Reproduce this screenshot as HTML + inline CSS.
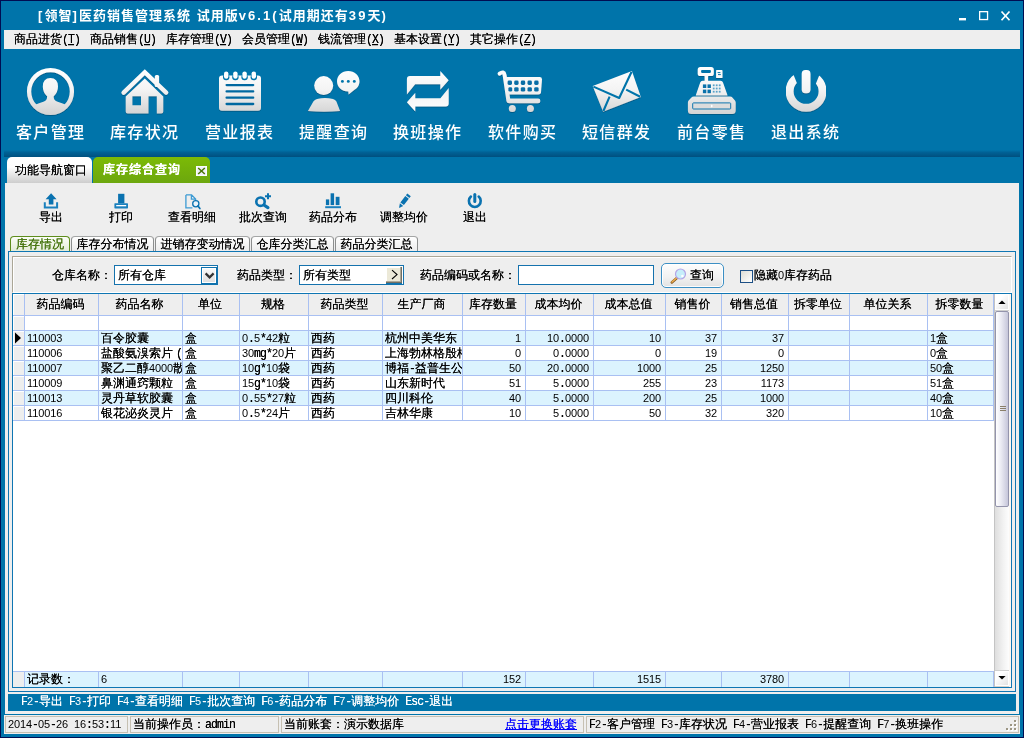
<!DOCTYPE html>
<html lang="zh-CN"><head><meta charset="utf-8"><title>[领智]医药销售管理系统</title>
<style>
*{box-sizing:border-box;margin:0;padding:0}
html,body{width:1024px;height:738px;overflow:hidden}
body{position:relative;background:#0074aa;font:12px/12px "Liberation Sans","WenQuanYi Zen Hei",sans-serif;color:#000;text-shadow:0 0 0 currentColor}
i{font-style:normal;font-family:"Liberation Mono",monospace;font-size:11.5px;letter-spacing:-.9px;display:inline-block;white-space:pre;transform:scaleY(1.13);transform-origin:0 78%}
b{font-weight:normal;font-family:"Liberation Sans",sans-serif;font-size:11px;letter-spacing:-.12px;text-shadow:none}
.abs,.abs>*{position:absolute}
div,span,svg{position:absolute}
.win{left:0;top:0;width:1024px;height:738px;transform:translateZ(0)}
.frame{left:0;top:0;width:1024px;height:738px;border:1px solid #000d52;z-index:50;pointer-events:none}
.title{left:38px;top:9px;height:14px;font:bold 13px/14px "Liberation Sans","Noto Sans CJK SC",sans-serif;color:#fff;white-space:pre;letter-spacing:1px;text-shadow:none}
.title em{font-style:normal;letter-spacing:2.1px}
.menubar{left:4px;top:30px;width:1016px;height:19px;background:#eee;border:1px solid #eee}
.menubar span{top:1px;height:14px;line-height:14px;white-space:pre}
.menubar u{text-decoration:underline}

.big{top:124px;width:94px;height:18px;text-align:center;color:#fff;font:500 16px/18px "Liberation Sans","Noto Sans CJK SC",sans-serif;white-space:nowrap;letter-spacing:1.3px;padding-left:1.3px;text-shadow:none}
.strip{left:4px;top:150px;width:1016px;height:7px;background:linear-gradient(#0074aa 0%,#006195 35%,#00507f 100%)}
.tab1{left:7px;top:157px;width:85px;height:26px;border-radius:5px 5px 0 0;background:linear-gradient(#fff 0%,#fdfdfd 40%,#cdcdcd 100%)}
.tab1 span{left:8px;top:7px;white-space:nowrap}
.tab2{left:93px;top:157px;width:117px;height:26px;border-radius:5px 5px 0 0;background:linear-gradient(#7cba06,#6ca70e)}
.tab2 span{left:10px;top:7px;color:#fff;font:bold 12px/12px "Liberation Sans","Noto Sans CJK SC",sans-serif;letter-spacing:1px;white-space:nowrap}
.tab2 .cb{left:103px;top:9px;width:11px;height:10px;background:#f1f1f8;border:1px solid #fbfbff}
.content{left:5px;top:183px;width:1014px;height:531px;background:#eee}
.tb{top:211px;width:72px;height:13px;line-height:13px;text-align:center;white-space:nowrap}
.st{top:236px;height:15px;border:1px solid #8c8e8e;border-top-color:#a4a6a6;border-bottom:none;border-radius:4px 4px 0 0;background:linear-gradient(#fff,#ececec);line-height:13px;text-align:center;white-space:nowrap;padding-top:1px}
.st.on{border-color:#5e8d1c;color:#44730c;background:linear-gradient(#fbfdf7,#e4ecd8)}
.tabpanel{left:8px;top:251px;width:1008px;height:441px;border:1px solid #0f76b3;background:#eee}
.edge{background:#eee}
.group{left:12px;top:256px;width:1000px;height:37px;background:#eee;border:1px solid #aaa697;border-right-color:#fff;border-bottom-color:#fff;box-shadow:inset 1px 1px 0 #fff}
.lbl{top:269px;height:13px;line-height:13px;white-space:nowrap}
.inp{top:265px;height:20px;background:#fff;border:1px solid #1572ad;box-shadow:inset 0 0 0 1px #fff}
.inp span{left:3px;top:3px;white-space:nowrap;line-height:13px}
.hint{left:8px;top:694px;width:1008px;height:17px;background:#0074aa;color:#fff}
.hint span{left:13px;top:1px;white-space:pre;line-height:13px}
.status{left:4px;top:715px;width:1016px;height:19px;background:#eee;border:1px solid #eee}
.sp{top:0;height:17px;border:1px solid #c6c0b2;line-height:13px;white-space:pre}
.sp span{top:1px;left:2px}

</style></head>
<body>
<div class="win">
<div class="frame"></div>
<div class="title"><em>[</em>领智<em>]</em>医药销售管理系统<em> </em>试用版<em>v6.1(</em>试用期还有<em>39</em>天<em>)</em></div>
<svg style="left:950px;top:6px" width="70" height="20" viewBox="950 6 70 20"><rect x="959" y="18" width="7" height="2.4" fill="#fff"/><rect x="979.65" y="11.65" width="7.9" height="7.9" fill="none" stroke="#fff" stroke-width="1.3"/><path d="M1001.5 11.5L1009.5 20.3M1009.5 11.5L1001.5 20.3" stroke="#fff" stroke-width="1.7" fill="none"/></svg>
<div class="menubar">
<span style="left:9px">商品进货<i>(<u>T</u>)</i></span>
<span style="left:85px">商品销售<i>(<u>U</u>)</i></span>
<span style="left:161px">库存管理<i>(<u>V</u>)</i></span>
<span style="left:237px">会员管理<i>(<u>W</u>)</i></span>
<span style="left:313px">钱流管理<i>(<u>X</u>)</i></span>
<span style="left:389px">基本设置<i>(<u>Y</u>)</i></span>
<span style="left:465px">其它操作<i>(<u>Z</u>)</i></span>
</div>
<div class="big" style="left:3px">客户管理</div>
<div class="big" style="left:97px">库存状况</div>
<div class="big" style="left:192px">营业报表</div>
<div class="big" style="left:286px">提醒查询</div>
<div class="big" style="left:380px">换班操作</div>
<div class="big" style="left:475px">软件购买</div>
<div class="big" style="left:569px">短信群发</div>
<div class="big" style="left:664px">前台零售</div>
<div class="big" style="left:758px">退出系统</div>
<div class="strip"></div>
<svg style="left:0;top:60px" width="1024" height="62" viewBox="0 60 1024 62">
<defs>
<linearGradient id="g" gradientUnits="userSpaceOnUse" x1="0" y1="68" x2="0" y2="115"><stop offset="0" stop-color="#fff"/><stop offset=".45" stop-color="#f4f4f4"/><stop offset="1" stop-color="#d2d2d2"/></linearGradient>
<mask id="pm" maskUnits="userSpaceOnUse" x="780" y="60" width="60" height="60"><rect x="780" y="60" width="60" height="60" fill="#fff"/><path d="M787.5 60H825.5L812.8 91.3H800.2Z" fill="#000"/></mask>
<clipPath id="c1"><circle cx="50.5" cy="91.5" r="20.2"/></clipPath>
<filter id="sh" x="-10%" y="-10%" width="120%" height="130%"><feDropShadow dx="0" dy="1" stdDeviation=".7" flood-color="#003a5c" flood-opacity=".45"/></filter>
</defs>
<g fill="url(#g)" filter="url(#sh)">
<!-- customer -->
<circle cx="50.5" cy="91.5" r="21.4" fill="none" stroke="url(#g)" stroke-width="4.3"/>
<g clip-path="url(#c1)"><path d="M30 116V107.5Q33 105 44 101.6Q47 100.4 47.2 96.5Q42.8 92.5 42.8 86.5Q42.8 77.9 50.4 77.9Q58 77.9 58 86.5Q58 92.5 53.6 96.5Q53.8 100.4 57 101.6Q68 105 71 107.5V116Z"/></g>
<!-- house -->
<rect x="154.8" y="75" width="4.3" height="12" rx="1.5"/>
<path d="M123.6 92.6L144.8 72.2L166.2 92.6" fill="none" stroke="url(#g)" stroke-width="4.4" stroke-linecap="round" stroke-linejoin="miter"/>
<path fill-rule="evenodd" d="M144.8 78.6L163.3 96.4V111.6Q163.3 113.6 161.3 113.6H127.7Q125.7 113.6 125.7 111.6V96.4ZM132.4 96.3V105.2H141V96.3ZM148.5 96.3V113.6H156.8V96.3Z"/>
<!-- notepad -->
<rect x="219" y="75.5" width="42" height="35.2" rx="3"/>
</g>
<g fill="#0074aa"><rect x="223" y="74" width="6.4" height="6.2" rx="3"/><rect x="232.2" y="74" width="6.4" height="6.2" rx="3"/><rect x="241.4" y="74" width="6.4" height="6.2" rx="3"/><rect x="250.6" y="74" width="6.4" height="6.2" rx="3"/></g>
<g fill="#fff"><rect x="224" y="71.4" width="4.4" height="7.4" rx="2.2"/><rect x="233.2" y="71.4" width="4.4" height="7.4" rx="2.2"/><rect x="242.4" y="71.4" width="4.4" height="7.4" rx="2.2"/><rect x="251.6" y="71.4" width="4.4" height="7.4" rx="2.2"/></g>
<path d="M226.6 85.1H253.2M226.6 91.4H253.2M226.6 97.7H253.2M226.6 104H253.2" stroke="#0068a0" stroke-width="2.3" stroke-linecap="round"/>
<g fill="url(#g)" filter="url(#sh)">
<!-- remind -->
<circle cx="323.7" cy="85.6" r="9.5"/>
<path d="M307.9 111L313.4 101.4Q314.5 99.5 317 98.9Q325 97.1 333 98.9Q335.4 99.5 336.4 101.4L340.1 111Q324 112.6 307.9 111Z"/>
<path d="M348.2 71C354.6 71 359.5 75.4 359.5 81.3C359.5 85.3 357.2 88.6 353.6 90.4L348.6 94.4L348.3 91.6C341.6 91.6 337 87 337 81.3C337 75.4 341.8 71 348.2 71Z"/>
</g>
<g fill="#0074aa"><circle cx="342.4" cy="81.4" r="1.45"/><circle cx="348.3" cy="81.4" r="1.45"/><circle cx="354.3" cy="81.4" r="1.45"/></g>
<g fill="url(#g)" filter="url(#sh)">
<!-- swap -->
<path id="sw" d="M440.3 76.1V70.9L448.7 80.2L440.3 89.7V84.2H415.2L406.9 94.6V79.1Q406.9 76.1 409.9 76.1Z"/>
<use href="#sw" transform="rotate(180 427.8 91.25)"/>
<!-- cart -->
<path d="M499.6 73.6Q503.8 70.6 504.6 75L508.4 100.6" fill="none" stroke="url(#g)" stroke-width="4" stroke-linecap="round"/>
<path d="M506.2 77H539.6Q542 77 542 79.4L541 92.2Q540.8 94.5 538.4 94.5H508.4Z"/>
<rect x="506.8" y="98.6" width="33.6" height="4.6" rx="2.3"/>
<circle cx="512.3" cy="108.4" r="3.5"/><circle cx="530.4" cy="108.4" r="3.5"/>
</g>
<g fill="#0a6ea6"><rect x="507.6" y="80.5" width="4.4" height="4.4" rx="1.4"/><rect x="514.2" y="80.5" width="4.4" height="4.4" rx="1.4"/><rect x="520.8" y="80.5" width="4.4" height="4.4" rx="1.4"/><rect x="527.5" y="80.5" width="4.4" height="4.4" rx="1.4"/><rect x="534.2" y="80.5" width="4.4" height="4.4" rx="1.4"/><rect x="508.4" y="87.2" width="3.8" height="4.4" rx="1.4"/><rect x="514.2" y="87.2" width="4.4" height="4.4" rx="1.4"/><rect x="520.8" y="87.2" width="4.4" height="4.4" rx="1.4"/><rect x="527.5" y="87.2" width="4.4" height="4.4" rx="1.4"/><rect x="534.2" y="87.2" width="4.4" height="4.4" rx="1.4"/></g>
<g fill="url(#g)" filter="url(#sh)">
<!-- envelope -->
<path d="M592.7 85.9L631.9 70.9L640.9 96.9L603.1 111.8Z"/>
</g>
<path d="M593.4 86.6L619.2 98L631.6 71.8M603.4 111L609.6 96.6M640.2 96.8L626.2 89.6" fill="none" stroke="#0074aa" stroke-width="2.1" stroke-linejoin="round"/>
<g fill="url(#g)" filter="url(#sh)">
<!-- register -->
<rect x="697.7" y="67.1" width="16.1" height="9" rx="2.6"/>
<rect x="704.6" y="75.5" width="3.5" height="6"/>
<rect x="716.1" y="70.1" width="6.4" height="7.9" rx=".6"/>
<path d="M702.6 80.7H720.5Q722.5 80.7 723 82.4L727.6 95.4H695.7L700.2 82.4Q700.8 80.7 702.6 80.7Z"/>
<path d="M694 96.6H730Q731.6 96.6 732.6 97.8L735 100.6Q735.7 101.4 735.7 102.6V110.6Q735.7 114.1 732.2 114.1H691.4Q687.9 114.1 687.9 110.6V102.6Q687.9 101.4 688.6 100.6L691.2 97.8Q692.2 96.6 694 96.6Z"/>
</g>
<rect x="701.1" y="70.1" width="9.8" height="2.8" rx=".8" fill="#0074aa"/>
<path d="M717.6 72.6H720.4M718 74.6H720.8" stroke="#0074aa" stroke-width="1"/>
<g fill="#0a72ab"><rect x="702.9" y="84.4" width="3.4" height="3.6"/><rect x="707.5" y="84.4" width="3.4" height="3.6"/><rect x="702.9" y="89.6" width="3.4" height="3.6"/><rect x="707.5" y="89.6" width="3.4" height="3.6"/></g>
<g fill="#5aa2c8"><rect x="712.8" y="84.4" width="1.8" height="1.8"/><rect x="715.8" y="84.4" width="1.8" height="1.8"/><rect x="718.8" y="84.4" width="1.8" height="1.8"/><rect x="712.8" y="87.6" width="1.8" height="1.8"/><rect x="715.8" y="87.6" width="1.8" height="1.8"/><rect x="718.8" y="87.6" width="1.8" height="1.8"/><rect x="712.8" y="90.8" width="1.8" height="1.8"/><rect x="715.8" y="90.8" width="1.8" height="1.8"/><rect x="718.8" y="90.8" width="1.8" height="1.8"/></g>
<rect x="692.7" y="102.9" width="38" height="6.1" rx=".8" fill="#dcdcdc" stroke="#0f76ae" stroke-width="1"/>
<path d="M711 104.4L713.2 106L711 107.6Z" fill="#fff"/>
<g fill="url(#g)" filter="url(#sh)">
<!-- power -->
<circle cx="806.1" cy="91.3" r="16.5" fill="none" stroke="url(#g)" stroke-width="8" mask="url(#pm)"/>
<rect x="801.7" y="70.1" width="8.8" height="23.1" rx="3.6"/>
</g>
</svg>
<div class="tab1"><span>功能导航窗口</span></div>
<div class="tab2"><span>库存综合查询</span><span class="cb"></span><svg style="left:103px;top:9px" width="11" height="10" viewBox="0 0 11 10"><path d="M2.2 2L8.8 8M8.8 2L2.2 8" stroke="#4a7606" stroke-width="1.5"/></svg></div>
<div class="content"></div>
<div class="tb" style="left:15px">导出</div>
<div class="tb" style="left:85px">打印</div>
<div class="tb" style="left:156px">查看明细</div>
<div class="tb" style="left:227px">批次查询</div>
<div class="tb" style="left:297px">药品分布</div>
<div class="tb" style="left:368px">调整均价</div>
<div class="tb" style="left:439px">退出</div>
<div class="st on" style="left:10px;width:60px">库存情况</div>
<div class="st" style="left:71px;width:83px">库存分布情况</div>
<div class="st" style="left:155px;width:95px">进销存变动情况</div>
<div class="st" style="left:251px;width:83px">仓库分类汇总</div>
<div class="st" style="left:335px;width:83px">药品分类汇总</div>
<div class="edge" style="left:5px;top:251px;width:3px;height:443px"></div><div class="edge" style="left:1016px;top:251px;width:3px;height:443px"></div><div class="edge" style="left:5px;top:691px;width:1014px;height:3px"></div>
<div class="tabpanel"></div>
<svg style="left:30px;top:190px" width="470" height="22" viewBox="30 190 470 22">
<g fill="#0a72b0">
<path d="M51.1 193.2L56.6 199.2H53.4V204.6H48.8V199.2H45.6Z"/>
<path d="M44.8 202.3V207.5H57.1V202.3" fill="none" stroke="#1a80bd" stroke-width="2"/>
<rect x="118.1" y="193.8" width="6.3" height="9.6"/>
<rect x="114.4" y="203.2" width="13.6" height="5.2" rx=".6" fill="#1a80bd"/>
<rect x="116.2" y="205" width="10" height="1.3" fill="#fff"/>
</g>
<path d="M185.9 194.9H191.6L195.6 199V200.4M191.4 195V199.2H195.4M185.9 194.9V207.9H192.4" fill="none" stroke="#3d9bd4" stroke-width="1.3"/>
<circle cx="195.8" cy="203.7" r="3.1" fill="#eaf4fb" stroke="#0a72b0" stroke-width="1.3"/>
<path d="M198 206L199.9 208.6" stroke="#0a72b0" stroke-width="1.7" stroke-linecap="round"/>
<circle cx="260.5" cy="201.7" r="4.2" fill="none" stroke="#0a72b0" stroke-width="2.6"/>
<path d="M263.9 205L267.9 207.6" stroke="#0a72b0" stroke-width="3.2" stroke-linecap="round"/>
<path d="M265 196.3H271M268 193.3V199.3" stroke="#0a72b0" stroke-width="2"/>
<g fill="#0a72b0">
<rect x="325.9" y="199.4" width="3.3" height="5.7"/><rect x="330.6" y="193.3" width="3.5" height="11.8"/><rect x="335.7" y="196.8" width="3.8" height="8.3"/>
<rect x="325.2" y="206.2" width="15.8" height="2" fill="#1a80bd"/>
<path d="M399 207.9L403.2 205.9L399.9 203.2ZM403.9 205.1L400.4 202.4L405.3 196.1L408.8 198.8ZM409.4 198L405.9 195.3L407.3 193.5L410.8 196.2Z"/>
</g>
<path d="M470.9 196.6A5.9 5.9 0 1 0 478.7 196.6" fill="none" stroke="#0a72b0" stroke-width="2.6" stroke-linecap="round"/>
<path d="M474.8 194.4V201.4" stroke="#0a72b0" stroke-width="3" stroke-linecap="round"/>
</svg>
<div class="group"></div>
<span class="lbl" style="left:52px">仓库名称：</span>
<div class="inp" style="left:114px;width:104px"><span>所有仓库</span></div>
<span class="lbl" style="left:237px">药品类型：</span>
<div class="inp" style="left:299px;width:105px"><span>所有类型</span></div>
<span class="lbl" style="left:420px">药品编码或名称：</span>
<div class="inp" style="left:518px;width:136px"></div>
<span class="lbl" style="left:754px">隐藏<b>0</b>库存药品</span>
<div style="left:201px;top:267px;width:16px;height:17px;border:1px solid #0f72ad;background:linear-gradient(#fafafa,#dedede);box-shadow:inset 0 0 0 1px #fff"></div>
<div style="left:201px;top:283px;width:16px;height:2px;background:#0f72ad"></div>
<svg style="left:203px;top:271px" width="13" height="10" viewBox="203 271 13 10"><path d="M205.6 273.4L209.6 277.4L213.6 273.4" fill="none" stroke="#333" stroke-width="2.2"/></svg>
<div style="left:386px;top:267px;width:16px;height:16px;background:#ece9d8;border-right:1px solid #716f64;border-bottom:1px solid #716f64;box-shadow:inset -1px -1px 0 #aca899,inset 1px 1px 0 #fff"></div>
<div style="left:386px;top:283px;width:16px;height:2px;background:#0f72ad"></div>
<svg style="left:388px;top:268px" width="13" height="14" viewBox="388 268 13 14"><path d="M392 270.2L397 274.6L392 279" fill="none" stroke="#000" stroke-width="1.1"/></svg>
<div style="left:661px;top:263px;width:63px;height:25px;border:1px solid #3c8fc4;border-radius:5px;background:linear-gradient(#fdfdfd,#f2f2f2 55%,#e2e2e2);box-shadow:inset 0 0 0 1px rgba(255,255,255,.9)"></div>
<svg style="left:668px;top:266px" width="22" height="20" viewBox="668 266 22 20"><path d="M676.6 278.2L671.8 282.4" stroke="#8a5a20" stroke-width="2.6" stroke-linecap="round"/><path d="M676.6 278L672 282" stroke="#f0b050" stroke-width="1.4" stroke-linecap="round"/><circle cx="680.5" cy="274" r="5" fill="#c6eefa" stroke="#b4a6e6" stroke-width="1.2"/><circle cx="682.4" cy="276" r="1.3" fill="#fff"/></svg>
<span class="lbl" style="left:690px">查询</span>
<div style="left:740px;top:270px;width:13px;height:13px;border:1px solid #1c4f85;background:linear-gradient(135deg,#dcdcd4,#fff)"></div>
<div class="hint"><span><i>F</i><b>2</b><i>-</i>导出<i> F</i><b>3</b><i>-</i>打印<i> F</i><b>4</b><i>-</i>查看明细<i> F</i><b>5</b><i>-</i>批次查询<i> F</i><b>6</b><i>-</i>药品分布<i> F</i><b>7</b><i>-</i>调整均价<i> Esc-</i>退出</span></div>
<div class="status">
<div class="sp" style="left:0;width:123px"><span><b>2014</b><i>-</i><b>05</b><i>-</i><b>26</b><i> </i><b>16</b><i>:</i><b>53</b><i>:</i><b>11</b></span></div>
<div class="sp" style="left:125px;width:149px"><span>当前操作员：<i>admin</i></span></div>
<div class="sp" style="left:276px;width:303px"><span>当前账套：演示数据库</span><span style="left:223px;color:#00f;text-decoration:underline">点击更换账套</span></div>
<div class="sp" style="left:581px;width:433px"><span><i>F</i><b>2</b><i>-</i>客户管理<i> F</i><b>3</b><i>-</i>库存状况<i> F</i><b>4</b><i>-</i>营业报表<i> F</i><b>6</b><i>-</i>提醒查询<i> F</i><b>7</b><i>-</i>换班操作</span></div>
<svg style="left:1000px;top:3px" width="13" height="13" viewBox="0 0 13 13"><g fill="#fff"><rect x="10" y="2" width="2" height="2"/><rect x="6" y="6" width="2" height="2"/><rect x="10" y="6" width="2" height="2"/><rect x="2" y="10" width="2" height="2"/><rect x="6" y="10" width="2" height="2"/><rect x="10" y="10" width="2" height="2"/></g><g fill="#9c9684"><rect x="9" y="1" width="2" height="2"/><rect x="5" y="5" width="2" height="2"/><rect x="9" y="5" width="2" height="2"/><rect x="1" y="9" width="2" height="2"/><rect x="5" y="9" width="2" height="2"/><rect x="9" y="9" width="2" height="2"/></g></svg>
</div>
<div style="left:12px;top:293px;width:1000px;height:395px;border:1px solid #0f76b3;background:#fff"></div>
<div style="left:13px;top:294px;width:981px;height:21px;background:#eee"></div>
<div style="left:13px;top:294px;width:11px;height:127px;background:#eee"></div>
<div style="left:13px;top:294px;width:1px;height:127px;background:#fff"></div>
<div style="left:13px;top:672px;width:1px;height:15px;background:#fff"></div>
<div style="left:13px;top:294px;width:11px;height:1px;background:#fff"></div>
<div style="left:13px;top:316px;width:11px;height:1px;background:#fff"></div>
<div style="left:13px;top:331px;width:11px;height:1px;background:#fff"></div>
<div style="left:13px;top:346px;width:11px;height:1px;background:#fff"></div>
<div style="left:13px;top:361px;width:11px;height:1px;background:#fff"></div>
<div style="left:13px;top:376px;width:11px;height:1px;background:#fff"></div>
<div style="left:13px;top:391px;width:11px;height:1px;background:#fff"></div>
<div style="left:13px;top:406px;width:11px;height:1px;background:#fff"></div>
<div style="left:13px;top:672px;width:11px;height:1px;background:#fff"></div>
<div style="left:25px;top:331px;width:969px;height:14px;background:#dbf3fe"></div>
<div style="left:25px;top:361px;width:969px;height:14px;background:#dbf3fe"></div>
<div style="left:25px;top:391px;width:969px;height:14px;background:#dbf3fe"></div>
<div style="left:25px;top:672px;width:969px;height:15px;background:#dbf3fe"></div>
<div style="left:13px;top:672px;width:11px;height:15px;background:#eee"></div>
<div style="left:13px;top:315px;width:981px;height:1px;background:#a9c0f2"></div>
<div style="left:13px;top:330px;width:981px;height:1px;background:#a9c0f2"></div>
<div style="left:13px;top:345px;width:981px;height:1px;background:#a9c0f2"></div>
<div style="left:13px;top:360px;width:981px;height:1px;background:#a9c0f2"></div>
<div style="left:13px;top:375px;width:981px;height:1px;background:#a9c0f2"></div>
<div style="left:13px;top:390px;width:981px;height:1px;background:#a9c0f2"></div>
<div style="left:13px;top:405px;width:981px;height:1px;background:#a9c0f2"></div>
<div style="left:13px;top:420px;width:981px;height:1px;background:#a9c0f2"></div>
<div style="left:13px;top:671px;width:981px;height:1px;background:#a9c0f2"></div>
<div style="left:24px;top:294px;width:1px;height:127px;background:#a9c0f2"></div>
<div style="left:24px;top:671px;width:1px;height:16px;background:#a9c0f2"></div>
<div style="left:98px;top:294px;width:1px;height:127px;background:#a9c0f2"></div>
<div style="left:98px;top:671px;width:1px;height:16px;background:#a9c0f2"></div>
<div style="left:182px;top:294px;width:1px;height:127px;background:#a9c0f2"></div>
<div style="left:182px;top:671px;width:1px;height:16px;background:#a9c0f2"></div>
<div style="left:239px;top:294px;width:1px;height:127px;background:#a9c0f2"></div>
<div style="left:239px;top:671px;width:1px;height:16px;background:#a9c0f2"></div>
<div style="left:308px;top:294px;width:1px;height:127px;background:#a9c0f2"></div>
<div style="left:308px;top:671px;width:1px;height:16px;background:#a9c0f2"></div>
<div style="left:382px;top:294px;width:1px;height:127px;background:#a9c0f2"></div>
<div style="left:382px;top:671px;width:1px;height:16px;background:#a9c0f2"></div>
<div style="left:462px;top:294px;width:1px;height:127px;background:#a9c0f2"></div>
<div style="left:462px;top:671px;width:1px;height:16px;background:#a9c0f2"></div>
<div style="left:525px;top:294px;width:1px;height:127px;background:#a9c0f2"></div>
<div style="left:525px;top:671px;width:1px;height:16px;background:#a9c0f2"></div>
<div style="left:593px;top:294px;width:1px;height:127px;background:#a9c0f2"></div>
<div style="left:593px;top:671px;width:1px;height:16px;background:#a9c0f2"></div>
<div style="left:665px;top:294px;width:1px;height:127px;background:#a9c0f2"></div>
<div style="left:665px;top:671px;width:1px;height:16px;background:#a9c0f2"></div>
<div style="left:721px;top:294px;width:1px;height:127px;background:#a9c0f2"></div>
<div style="left:721px;top:671px;width:1px;height:16px;background:#a9c0f2"></div>
<div style="left:788px;top:294px;width:1px;height:127px;background:#a9c0f2"></div>
<div style="left:788px;top:671px;width:1px;height:16px;background:#a9c0f2"></div>
<div style="left:849px;top:294px;width:1px;height:127px;background:#a9c0f2"></div>
<div style="left:849px;top:671px;width:1px;height:16px;background:#a9c0f2"></div>
<div style="left:927px;top:294px;width:1px;height:127px;background:#a9c0f2"></div>
<div style="left:927px;top:671px;width:1px;height:16px;background:#a9c0f2"></div>
<div style="left:993px;top:294px;width:1px;height:127px;background:#a9c0f2"></div>
<div style="left:993px;top:671px;width:1px;height:16px;background:#a9c0f2"></div>
<span style="left:24px;top:298px;width:73px;text-align:center;line-height:13px;white-space:nowrap">药品编码</span>
<span style="left:98px;top:298px;width:83px;text-align:center;line-height:13px;white-space:nowrap">药品名称</span>
<span style="left:182px;top:298px;width:56px;text-align:center;line-height:13px;white-space:nowrap">单位</span>
<span style="left:239px;top:298px;width:68px;text-align:center;line-height:13px;white-space:nowrap">规格</span>
<span style="left:308px;top:298px;width:73px;text-align:center;line-height:13px;white-space:nowrap">药品类型</span>
<span style="left:382px;top:298px;width:79px;text-align:center;line-height:13px;white-space:nowrap">生产厂商</span>
<span style="left:462px;top:298px;width:62px;text-align:center;line-height:13px;white-space:nowrap">库存数量</span>
<span style="left:525px;top:298px;width:67px;text-align:center;line-height:13px;white-space:nowrap">成本均价</span>
<span style="left:593px;top:298px;width:71px;text-align:center;line-height:13px;white-space:nowrap">成本总值</span>
<span style="left:665px;top:298px;width:55px;text-align:center;line-height:13px;white-space:nowrap">销售价</span>
<span style="left:721px;top:298px;width:66px;text-align:center;line-height:13px;white-space:nowrap">销售总值</span>
<span style="left:788px;top:298px;width:60px;text-align:center;line-height:13px;white-space:nowrap">拆零单位</span>
<span style="left:849px;top:298px;width:77px;text-align:center;line-height:13px;white-space:nowrap">单位关系</span>
<span style="left:927px;top:298px;width:65px;text-align:center;line-height:13px;white-space:nowrap">拆零数量</span>
<span style="left:25px;top:332px;width:73px;padding-left:2px;line-height:13px;height:14px;overflow:hidden;white-space:nowrap"><b>110003</b></span>
<span style="left:99px;top:332px;width:83px;padding-left:2px;line-height:13px;height:14px;overflow:hidden;white-space:nowrap">百令胶囊</span>
<span style="left:183px;top:332px;width:56px;padding-left:2px;line-height:13px;height:14px;overflow:hidden;white-space:nowrap">盒</span>
<span style="left:240px;top:332px;width:68px;padding-left:2px;line-height:13px;height:14px;overflow:hidden;white-space:nowrap"><b>0</b><i>.</i><b>5</b><i>*</i><b>42</b>粒</span>
<span style="left:309px;top:332px;width:73px;padding-left:2px;line-height:13px;height:14px;overflow:hidden;white-space:nowrap">西药</span>
<span style="left:383px;top:332px;width:79px;padding-left:2px;line-height:13px;height:14px;overflow:hidden;white-space:nowrap">杭州中美华东</span>
<span style="left:463px;top:332px;width:62px;text-align:right;padding-right:4px;line-height:13px;height:14px;overflow:hidden;white-space:nowrap"><b>1</b></span>
<span style="left:526px;top:332px;width:67px;text-align:right;padding-right:4px;line-height:13px;height:14px;overflow:hidden;white-space:nowrap"><b>10</b><i>.</i><b>0000</b></span>
<span style="left:594px;top:332px;width:71px;text-align:right;padding-right:4px;line-height:13px;height:14px;overflow:hidden;white-space:nowrap"><b>10</b></span>
<span style="left:666px;top:332px;width:55px;text-align:right;padding-right:4px;line-height:13px;height:14px;overflow:hidden;white-space:nowrap"><b>37</b></span>
<span style="left:722px;top:332px;width:66px;text-align:right;padding-right:4px;line-height:13px;height:14px;overflow:hidden;white-space:nowrap"><b>37</b></span>
<span style="left:928px;top:332px;width:65px;padding-left:2px;line-height:13px;height:14px;overflow:hidden;white-space:nowrap"><b>1</b>盒</span>
<span style="left:25px;top:347px;width:73px;padding-left:2px;line-height:13px;height:14px;overflow:hidden;white-space:nowrap"><b>110006</b></span>
<span style="left:99px;top:347px;width:83px;padding-left:2px;line-height:13px;height:14px;overflow:hidden;white-space:nowrap">盐酸氨溴索片<i style="margin-left:3px">(</i></span>
<span style="left:183px;top:347px;width:56px;padding-left:2px;line-height:13px;height:14px;overflow:hidden;white-space:nowrap">盒</span>
<span style="left:240px;top:347px;width:68px;padding-left:2px;line-height:13px;height:14px;overflow:hidden;white-space:nowrap"><b>30</b><i>mg*</i><b>20</b>片</span>
<span style="left:309px;top:347px;width:73px;padding-left:2px;line-height:13px;height:14px;overflow:hidden;white-space:nowrap">西药</span>
<span style="left:383px;top:347px;width:79px;padding-left:2px;line-height:13px;height:14px;overflow:hidden;white-space:nowrap">上海勃林格殷格</span>
<span style="left:463px;top:347px;width:62px;text-align:right;padding-right:4px;line-height:13px;height:14px;overflow:hidden;white-space:nowrap"><b>0</b></span>
<span style="left:526px;top:347px;width:67px;text-align:right;padding-right:4px;line-height:13px;height:14px;overflow:hidden;white-space:nowrap"><b>0</b><i>.</i><b>0000</b></span>
<span style="left:594px;top:347px;width:71px;text-align:right;padding-right:4px;line-height:13px;height:14px;overflow:hidden;white-space:nowrap"><b>0</b></span>
<span style="left:666px;top:347px;width:55px;text-align:right;padding-right:4px;line-height:13px;height:14px;overflow:hidden;white-space:nowrap"><b>19</b></span>
<span style="left:722px;top:347px;width:66px;text-align:right;padding-right:4px;line-height:13px;height:14px;overflow:hidden;white-space:nowrap"><b>0</b></span>
<span style="left:928px;top:347px;width:65px;padding-left:2px;line-height:13px;height:14px;overflow:hidden;white-space:nowrap"><b>0</b>盒</span>
<span style="left:25px;top:362px;width:73px;padding-left:2px;line-height:13px;height:14px;overflow:hidden;white-space:nowrap"><b>110007</b></span>
<span style="left:99px;top:362px;width:83px;padding-left:2px;line-height:13px;height:14px;overflow:hidden;white-space:nowrap">聚乙二醇<b>4000</b>散</span>
<span style="left:183px;top:362px;width:56px;padding-left:2px;line-height:13px;height:14px;overflow:hidden;white-space:nowrap">盒</span>
<span style="left:240px;top:362px;width:68px;padding-left:2px;line-height:13px;height:14px;overflow:hidden;white-space:nowrap"><b>10</b><i>g*</i><b>10</b>袋</span>
<span style="left:309px;top:362px;width:73px;padding-left:2px;line-height:13px;height:14px;overflow:hidden;white-space:nowrap">西药</span>
<span style="left:383px;top:362px;width:79px;padding-left:2px;line-height:13px;height:14px;overflow:hidden;white-space:nowrap">博福<i>-</i>益普生公</span>
<span style="left:463px;top:362px;width:62px;text-align:right;padding-right:4px;line-height:13px;height:14px;overflow:hidden;white-space:nowrap"><b>50</b></span>
<span style="left:526px;top:362px;width:67px;text-align:right;padding-right:4px;line-height:13px;height:14px;overflow:hidden;white-space:nowrap"><b>20</b><i>.</i><b>0000</b></span>
<span style="left:594px;top:362px;width:71px;text-align:right;padding-right:4px;line-height:13px;height:14px;overflow:hidden;white-space:nowrap"><b>1000</b></span>
<span style="left:666px;top:362px;width:55px;text-align:right;padding-right:4px;line-height:13px;height:14px;overflow:hidden;white-space:nowrap"><b>25</b></span>
<span style="left:722px;top:362px;width:66px;text-align:right;padding-right:4px;line-height:13px;height:14px;overflow:hidden;white-space:nowrap"><b>1250</b></span>
<span style="left:928px;top:362px;width:65px;padding-left:2px;line-height:13px;height:14px;overflow:hidden;white-space:nowrap"><b>50</b>盒</span>
<span style="left:25px;top:377px;width:73px;padding-left:2px;line-height:13px;height:14px;overflow:hidden;white-space:nowrap"><b>110009</b></span>
<span style="left:99px;top:377px;width:83px;padding-left:2px;line-height:13px;height:14px;overflow:hidden;white-space:nowrap">鼻渊通窍颗粒</span>
<span style="left:183px;top:377px;width:56px;padding-left:2px;line-height:13px;height:14px;overflow:hidden;white-space:nowrap">盒</span>
<span style="left:240px;top:377px;width:68px;padding-left:2px;line-height:13px;height:14px;overflow:hidden;white-space:nowrap"><b>15</b><i>g*</i><b>10</b>袋</span>
<span style="left:309px;top:377px;width:73px;padding-left:2px;line-height:13px;height:14px;overflow:hidden;white-space:nowrap">西药</span>
<span style="left:383px;top:377px;width:79px;padding-left:2px;line-height:13px;height:14px;overflow:hidden;white-space:nowrap">山东新时代</span>
<span style="left:463px;top:377px;width:62px;text-align:right;padding-right:4px;line-height:13px;height:14px;overflow:hidden;white-space:nowrap"><b>51</b></span>
<span style="left:526px;top:377px;width:67px;text-align:right;padding-right:4px;line-height:13px;height:14px;overflow:hidden;white-space:nowrap"><b>5</b><i>.</i><b>0000</b></span>
<span style="left:594px;top:377px;width:71px;text-align:right;padding-right:4px;line-height:13px;height:14px;overflow:hidden;white-space:nowrap"><b>255</b></span>
<span style="left:666px;top:377px;width:55px;text-align:right;padding-right:4px;line-height:13px;height:14px;overflow:hidden;white-space:nowrap"><b>23</b></span>
<span style="left:722px;top:377px;width:66px;text-align:right;padding-right:4px;line-height:13px;height:14px;overflow:hidden;white-space:nowrap"><b>1173</b></span>
<span style="left:928px;top:377px;width:65px;padding-left:2px;line-height:13px;height:14px;overflow:hidden;white-space:nowrap"><b>51</b>盒</span>
<span style="left:25px;top:392px;width:73px;padding-left:2px;line-height:13px;height:14px;overflow:hidden;white-space:nowrap"><b>110013</b></span>
<span style="left:99px;top:392px;width:83px;padding-left:2px;line-height:13px;height:14px;overflow:hidden;white-space:nowrap">灵丹草软胶囊</span>
<span style="left:183px;top:392px;width:56px;padding-left:2px;line-height:13px;height:14px;overflow:hidden;white-space:nowrap">盒</span>
<span style="left:240px;top:392px;width:68px;padding-left:2px;line-height:13px;height:14px;overflow:hidden;white-space:nowrap"><b>0</b><i>.</i><b>55</b><i>*</i><b>27</b>粒</span>
<span style="left:309px;top:392px;width:73px;padding-left:2px;line-height:13px;height:14px;overflow:hidden;white-space:nowrap">西药</span>
<span style="left:383px;top:392px;width:79px;padding-left:2px;line-height:13px;height:14px;overflow:hidden;white-space:nowrap">四川科伦</span>
<span style="left:463px;top:392px;width:62px;text-align:right;padding-right:4px;line-height:13px;height:14px;overflow:hidden;white-space:nowrap"><b>40</b></span>
<span style="left:526px;top:392px;width:67px;text-align:right;padding-right:4px;line-height:13px;height:14px;overflow:hidden;white-space:nowrap"><b>5</b><i>.</i><b>0000</b></span>
<span style="left:594px;top:392px;width:71px;text-align:right;padding-right:4px;line-height:13px;height:14px;overflow:hidden;white-space:nowrap"><b>200</b></span>
<span style="left:666px;top:392px;width:55px;text-align:right;padding-right:4px;line-height:13px;height:14px;overflow:hidden;white-space:nowrap"><b>25</b></span>
<span style="left:722px;top:392px;width:66px;text-align:right;padding-right:4px;line-height:13px;height:14px;overflow:hidden;white-space:nowrap"><b>1000</b></span>
<span style="left:928px;top:392px;width:65px;padding-left:2px;line-height:13px;height:14px;overflow:hidden;white-space:nowrap"><b>40</b>盒</span>
<span style="left:25px;top:407px;width:73px;padding-left:2px;line-height:13px;height:14px;overflow:hidden;white-space:nowrap"><b>110016</b></span>
<span style="left:99px;top:407px;width:83px;padding-left:2px;line-height:13px;height:14px;overflow:hidden;white-space:nowrap">银花泌炎灵片</span>
<span style="left:183px;top:407px;width:56px;padding-left:2px;line-height:13px;height:14px;overflow:hidden;white-space:nowrap">盒</span>
<span style="left:240px;top:407px;width:68px;padding-left:2px;line-height:13px;height:14px;overflow:hidden;white-space:nowrap"><b>0</b><i>.</i><b>5</b><i>*</i><b>24</b>片</span>
<span style="left:309px;top:407px;width:73px;padding-left:2px;line-height:13px;height:14px;overflow:hidden;white-space:nowrap">西药</span>
<span style="left:383px;top:407px;width:79px;padding-left:2px;line-height:13px;height:14px;overflow:hidden;white-space:nowrap">吉林华康</span>
<span style="left:463px;top:407px;width:62px;text-align:right;padding-right:4px;line-height:13px;height:14px;overflow:hidden;white-space:nowrap"><b>10</b></span>
<span style="left:526px;top:407px;width:67px;text-align:right;padding-right:4px;line-height:13px;height:14px;overflow:hidden;white-space:nowrap"><b>5</b><i>.</i><b>0000</b></span>
<span style="left:594px;top:407px;width:71px;text-align:right;padding-right:4px;line-height:13px;height:14px;overflow:hidden;white-space:nowrap"><b>50</b></span>
<span style="left:666px;top:407px;width:55px;text-align:right;padding-right:4px;line-height:13px;height:14px;overflow:hidden;white-space:nowrap"><b>32</b></span>
<span style="left:722px;top:407px;width:66px;text-align:right;padding-right:4px;line-height:13px;height:14px;overflow:hidden;white-space:nowrap"><b>320</b></span>
<span style="left:928px;top:407px;width:65px;padding-left:2px;line-height:13px;height:14px;overflow:hidden;white-space:nowrap"><b>10</b>盒</span>
<svg style="left:14px;top:332px" width="9" height="12" viewBox="0 0 9 12"><path d="M1 0.5L7 6L1 11.5Z" fill="#000"/></svg>
<span style="left:27px;top:673px;line-height:13px;white-space:nowrap">记录数：</span>
<span style="left:101px;top:673px;line-height:13px"><b>6</b></span>
<span style="left:463px;top:673px;width:62px;text-align:right;padding-right:4px;line-height:13px"><b>152</b></span>
<span style="left:594px;top:673px;width:71px;text-align:right;padding-right:4px;line-height:13px"><b>1515</b></span>
<span style="left:722px;top:673px;width:66px;text-align:right;padding-right:4px;line-height:13px"><b>3780</b></span>
<div style="left:994px;top:294px;width:17px;height:393px;background:linear-gradient(90deg,#c4c4c4 0,#c4c4c4 1px,#dedede 1px,#f2f2f2 55%,#fdfdfd 15px,#fbf7f3 15px)"></div>
<div style="left:995px;top:294px;width:14px;height:16px;background:linear-gradient(135deg,#fff 30%,#e2e2e2);border:1px solid #fff;box-shadow:0 1px 0 #cfcfcf"></div>
<div style="left:995px;top:671px;width:14px;height:15px;background:linear-gradient(135deg,#fff 30%,#e2e2e2);border:1px solid #fff;box-shadow:0 1px 0 #d8d2ca,0 -1px 0 #cfcfcf"></div>
<svg style="left:994px;top:294px" width="17" height="16" viewBox="0 0 17 16"><path d="M4.4 10.1L8 6.4L11.6 10.1Z" fill="#000"/></svg>
<svg style="left:994px;top:671px" width="17" height="16" viewBox="0 0 17 16"><path d="M4.4 4.9L8 8.6L11.6 4.9Z" fill="#000"/></svg>
<div style="left:995px;top:311px;width:14px;height:196px;border:1px solid #9494ac;border-radius:2px;background:linear-gradient(90deg,#fff,#ececf4 40%,#c6c6da)"></div>
<svg style="left:999px;top:405px" width="8" height="8" viewBox="0 0 8 8"><path d="M1 1.5H7M1 3.5H7M1 5.5H7" stroke="#8a7f6a" stroke-width="1"/></svg>
</div>
</body></html>
